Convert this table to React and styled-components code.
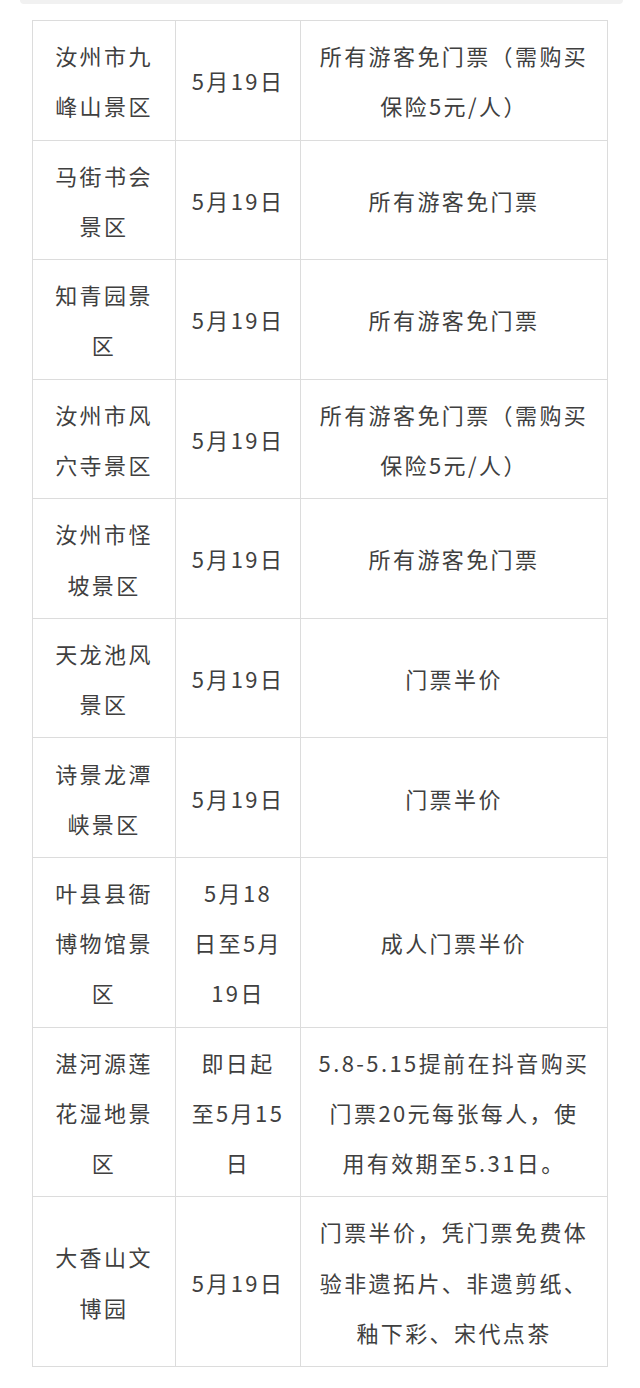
import React from "react";
import styled, { createGlobalStyle } from "styled-components";

const GlobalStyle = createGlobalStyle`
  html, body {
    margin: 0;
    padding: 0;
    background: #ffffff;
  }
  body {
    font-family: "Noto Sans CJK SC", "Noto Sans", sans-serif;
  }
`;

const Page = styled.div`
  width: 640px;
  min-height: 1388px;
  box-sizing: border-box;
  background: #fff;
`;

const TopEdge = styled.div`
  margin: 0 17px 0 20px;
  height: 4px;
  background: #f1f1f1;
  border-radius: 0 0 8px 8px;
`;

const Table = styled.table`
  margin: 16px 0 0 32px;
  width: 575px;
  border-collapse: collapse;
  table-layout: fixed;
`;

const Cell = styled.td`
  border: 1px solid #dcdcdc;
  padding: 9.2px ${(p) => p.$pad || 8}px;
  text-align: center;
  vertical-align: middle;
  font-size: 22px;
  line-height: 50.1px;
  letter-spacing: 2.4px;
  color: #404040;
  white-space: nowrap;
`;

const rows = [
  [["汝州市九", "峰山景区"], ["5月19日"], ["所有游客免门票（需购买", "保险5元/人）"]],
  [["马街书会", "景区"], ["5月19日"], ["所有游客免门票"]],
  [["知青园景", "区"], ["5月19日"], ["所有游客免门票"]],
  [["汝州市风", "穴寺景区"], ["5月19日"], ["所有游客免门票（需购买", "保险5元/人）"]],
  [["汝州市怪", "坡景区"], ["5月19日"], ["所有游客免门票"]],
  [["天龙池风", "景区"], ["5月19日"], ["门票半价"]],
  [["诗景龙潭", "峡景区"], ["5月19日"], ["门票半价"]],
  [["叶县县衙", "博物馆景", "区"], ["5月18", "日至5月", "19日"], ["成人门票半价"]],
  [
    ["湛河源莲", "花湿地景", "区"],
    ["即日起", "至5月15", "日"],
    ["5.8-5.15提前在抖音购买", "门票20元每张每人，使", "用有效期至5.31日。"],
  ],
  [
    ["大香山文", "博园"],
    ["5月19日"],
    ["门票半价，凭门票免费体", "验非遗拓片、非遗剪纸、", "釉下彩、宋代点茶"],
  ],
];

const Lines = ({ lines }) =>
  lines.map((l, i) => (
    <React.Fragment key={i}>
      {i > 0 && <br />}
      {l}
    </React.Fragment>
  ));

export default function App() {
  return (
    <Page>
      <GlobalStyle />
      <TopEdge />
      <Table>
        <colgroup>
          <col style={{ width: 143 }} />
          <col style={{ width: 125 }} />
          <col style={{ width: 307 }} />
        </colgroup>
        <tbody>
          {rows.map((r, i) => (
            <tr key={i}>
              <Cell $pad={4}>
                <Lines lines={r[0]} />
              </Cell>
              <Cell $pad={4}>
                <Lines lines={r[1]} />
              </Cell>
              <Cell $pad={4}>
                <Lines lines={r[2]} />
              </Cell>
            </tr>
          ))}
        </tbody>
      </Table>
    </Page>
  );
}
